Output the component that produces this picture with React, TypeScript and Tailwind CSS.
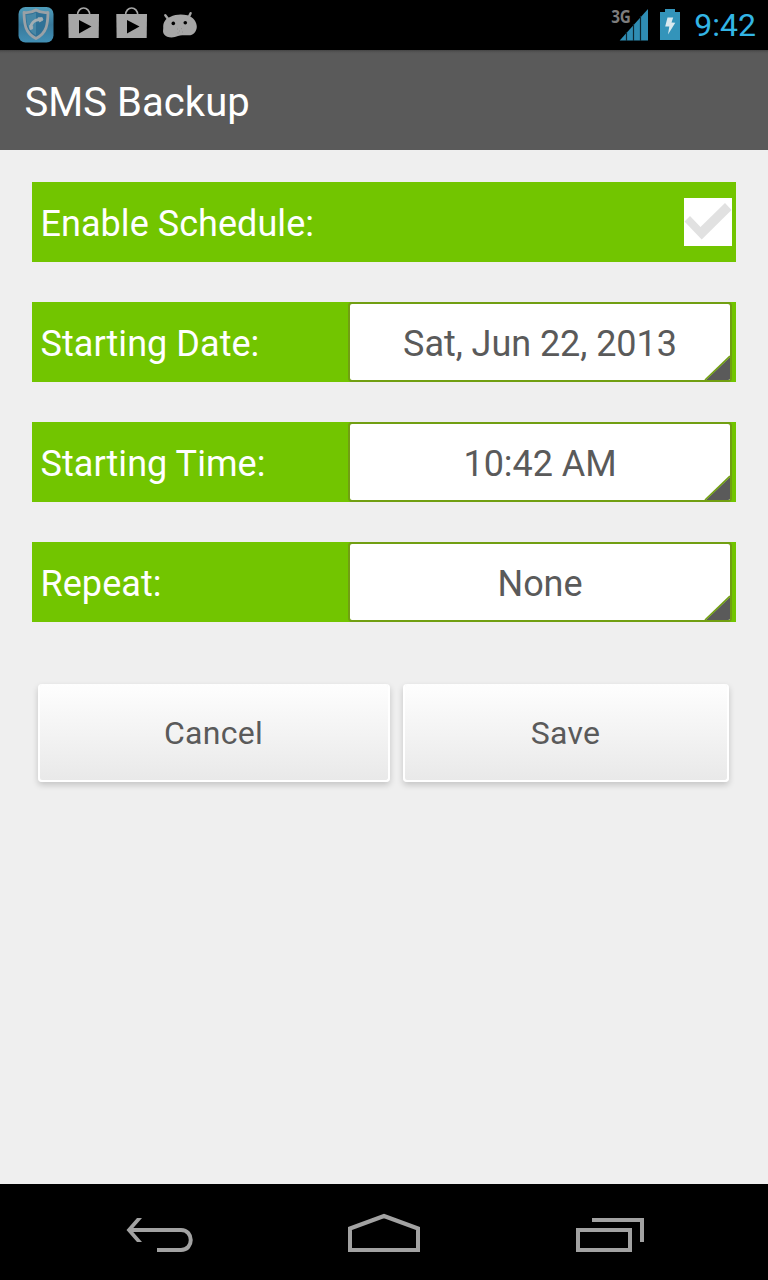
import React, { useState } from "react";

const ShieldIcon = () => (
  <svg width="36" height="36" viewBox="0 0 36 36">
    <defs>
      <linearGradient id="shieldBg" x1="0" y1="0" x2="0" y2="1">
        <stop offset="0" stopColor="#4f9dbb" />
        <stop offset="0.5" stopColor="#37789a" />
        <stop offset="1" stopColor="#428fb4" />
      </linearGradient>
    </defs>
    <rect x="0.5" y="0" width="35" height="35.5" rx="7" fill="url(#shieldBg)" />
    <path
      d="M18 3C14 5.500 9.500 6 6 5.500C6.300 17 7 26 18 31.500C29 26 29.700 17 30 5.500C26.500 6 22 5.500 18 3Z"
      fill="#2f7196"
      stroke="#9aa1a6"
      strokeWidth="2.800"
      strokeLinejoin="round"
    />
    <path d="M18 5.500C15 7.300 11.500 7.800 8.200 7.600C8.500 17 10 24 18 28.500Z" fill="#4787a6" />
    <path d="M12.800 20.500C13 16.500 16 13.200 21 12.600" fill="none" stroke="#a3adb2" strokeWidth="3" />
    <path d="M11.500 18.500L14.800 19.500L14.500 22L12 22.500Z M20 10.800L24.200 10.600L25 13L21.500 15Z" fill="#a3adb2" stroke="#a3adb2" strokeWidth="0.800" strokeLinejoin="round" />
  </svg>
);

const StoreIcon = () => (
  <svg width="32" height="32" viewBox="0 0 32 32">
    <path d="M9.500 8.500C9.500 -1.500 21.800 -1.500 21.800 8.500" fill="none" stroke="#a6a6a6" strokeWidth="1.700" />
    <path d="M0.300 7H31L30.700 31H0.600Z" fill="#a6a6a6" />
    <path d="M11 13V26.500L23.500 19.500Z" fill="#000" />
  </svg>
);

const AndroidIcon = () => (
  <svg width="36" height="28" viewBox="0 0 36 28">
    <path d="M3.300 4.200L6.500 8.500M28.600 2.200L26.800 6" stroke="#a6a6a6" strokeWidth="2.400" strokeLinecap="round" />
    <path
      d="M8 6C14 3.200 19 3.200 25.500 4.200C31.500 6.200 35 11 34.800 16C34.500 21 31 24.500 26.500 24.300C22.500 24.600 19 23.500 16 25C11 27.300 4.500 26.700 2.200 23.500C0.200 21 1.500 18.500 1.200 15.500C1.500 11 3.500 7.500 8 6Z"
      fill="#a6a6a6"
    />
    <circle cx="11.300" cy="12.400" r="1.800" fill="#000" />
    <circle cx="23.300" cy="11.700" r="1.800" fill="#000" />
    <path d="M15 18h1M19 17.600h1M17 20h1M15.500 22h1M20 21h1" stroke="#8a8a8a" strokeWidth="0.800" />
  </svg>
);

const SignalIcon = () => (
  <svg width="30" height="34" viewBox="0 0 30 34">
    <path d="M0.700 32.500L29 1V32.500Z" fill="#2f8db4" />
    <path d="M7.500 24V33M14.500 16V33M21.500 8V33" stroke="#0d2833" strokeWidth="1.200" />
  </svg>
);

const BatteryIcon = () => (
  <svg width="20" height="31" viewBox="0 0 20 31">
    <path d="M5 0H15V3H20V31H0V3H5Z" fill="#3394ba" />
    <path d="M7.500 8.500H13.200L11.500 13.500L15.300 13.800L8 25.500L9.300 17.500L5.200 17.500Z" fill="#d9e9ef" />
  </svg>
);

const StatusBar = () => (
  <div className="h-[50px] bg-black flex items-start justify-between">
    <div className="flex items-start pl-[18px]">
      <div className="pt-[7px]"><ShieldIcon /></div>
      <div className="pt-[7px] ml-[14px]"><StoreIcon /></div>
      <div className="pt-[7px] ml-4"><StoreIcon /></div>
      <div className="pt-[11px] ml-[14px]"><AndroidIcon /></div>
    </div>
    <div className="flex items-start pr-[12px]">
      <span className="mt-[7px] -mr-[11px] text-[18px] leading-[18px] font-bold text-[#7d7d7d] font-['Open_Sans',sans-serif] tracking-[-0.5px] origin-right scale-x-85">
        3G
      </span>
      <div className="pt-[8px]"><SignalIcon /></div>
      <div className="pt-[9px] ml-[11px]"><BatteryIcon /></div>
      <span className="ml-[14px] mt-[6px] text-[32px] leading-[38px] text-[#33b5e5]">9:42</span>
    </div>
  </div>
);

const Row = ({ label, children }: { label: string; children: React.ReactNode }) => (
  <div className="h-20 bg-[#72c500] flex items-center justify-between pl-[8.5px] pr-1">
    <span className="text-4xl leading-[42px] pt-[3px] text-white tracking-[0.05px]">{label}</span>
    {children}
  </div>
);

const Spinner = ({ value }: { value: string }) => (
  <button className="relative w-96 h-20 bg-white border-2 border-[#719f12] rounded-[4px] text-4xl leading-[42px] pt-[3px] text-[#5a5a5a] tracking-[-0.05px]">
    {value}
    <svg className="absolute right-0 bottom-0" width="27" height="25" viewBox="0 0 27 25">
      <path d="M3 25L27 2V23.500L25.500 25Z" fill="#5a5a5a" />
      <path d="M2 25L27 1" stroke="#719f12" strokeWidth="1.700" />
    </svg>
  </button>
);

const PushButton = ({ label, width }: { label: string; width: string }) => (
  <button
    className={`${width} h-[98px] rounded-[4px] border-2 border-t-0 border-white bg-gradient-to-b from-[#fefefe] to-[#e9e9e9] bg-clip-padding shadow-[0_3px_6px_rgba(0,0,0,0.18)] text-[32px] leading-[38px] pt-[1px] pr-[1px] text-[#5a5a5a] tracking-[0.3px]`}
  >
    {label}
  </button>
);

const NavBar = () => (
  <div className="h-24 bg-black flex items-center justify-between pl-[124px] pr-[122px]">
    <svg width="72" height="72" viewBox="124 1196 72 72" fill="none" stroke="#a2a2a2" strokeWidth="4">
      <path d="M130 1230H181C194 1230 194 1250 181 1250H157" />
      <path d="M142 1218H137L126.500 1230L137 1242H142L131.500 1230Z" fill="#a2a2a2" stroke="none" />
    </svg>
    <svg width="76" height="72" viewBox="347 1196 76 72" fill="none" stroke="#a2a2a2" strokeWidth="4">
      <path d="M350 1250V1228.500L384 1216L418 1228.500V1250Z" />
    </svg>
    <svg width="72" height="72" viewBox="574 1196 72 72" fill="none" stroke="#a2a2a2" strokeWidth="4">
      <path d="M578 1230H630V1250H578ZM592 1220H642V1242" />
    </svg>
  </div>
);

const App = () => {
  const [enabled, setEnabled] = useState(false);

  return (
    <div className="w-[768px] h-[1280px] flex flex-col bg-[#efefef] font-[Roboto,sans-serif]">
      <StatusBar />
      <header className="h-[100px] bg-[linear-gradient(#444_0px,#555_2px,#5a5a5a_4px)] flex items-center pl-[24.500px]">
        <h1 className="text-[40px] leading-[48px] pt-[5px] text-white tracking-[0.05px]">SMS Backup</h1>
      </header>
      <main className="flex-1 px-8 pt-8">
        <div className="grid gap-10">
          <Row label="Enable Schedule:">
            <button
              aria-label="enable schedule"
              className="w-12 h-12 bg-white"
              onClick={() => setEnabled(!enabled)}
            >
              <svg width="48" height="48" viewBox="0 0 48 48">
                <path d="M0.500 23.500L6 18L16.500 29L41 5L47.500 12L17.700 41.500Z" fill={enabled ? "#72c500" : "#e1e1e1"} />
              </svg>
            </button>
          </Row>
          <Row label="Starting Date:">
            <Spinner value="Sat, Jun 22, 2013" />
          </Row>
          <Row label="Starting Time:">
            <Spinner value="10:42 AM" />
          </Row>
          <Row label="Repeat:">
            <Spinner value="None" />
          </Row>
        </div>
        <div className="flex gap-[13px] mt-[62px] pl-[6px]">
          <PushButton label="Cancel" width="w-[352px]" />
          <PushButton label="Save" width="w-[326px]" />
        </div>
      </main>
      <NavBar />
    </div>
  );
};

export default App;
